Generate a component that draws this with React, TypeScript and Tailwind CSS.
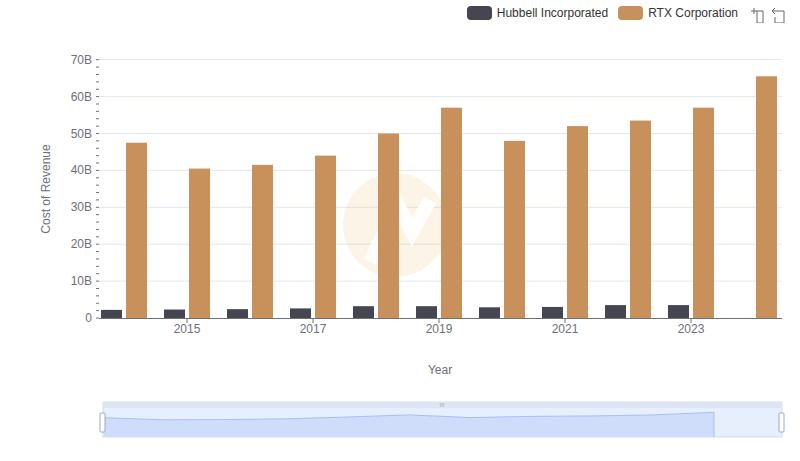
export default function App() {
  const rtx = [47.5, 40.5, 41.5, 44, 50, 57, 48, 52, 53.5, 57, 65.5];
  const hub = [2.2, 2.3, 2.4, 2.6, 3.2, 3.2, 2.9, 3.0, 3.5, 3.5, 0];
  const y = (v: number) => 318 - v * 3.69;
  const font = { fontFamily: '"Liberation Sans", Arial, sans-serif' };
  const minor: number[] = [];
  for (let i = 0; i <= 35; i++) minor.push(318 - i * 7.38);
  const area = rtx.map((v, i) => `${104 + i * 61} ${432 - v * 0.3}`).join(" L ");
  return (
    <div className="relative w-[800px] h-[461px] bg-white overflow-hidden" style={font}>
      <div className="absolute top-[3px] right-[12px] flex items-center gap-[10px] text-[12px] text-[#333]">
        <div className="flex items-center gap-[5px]">
          <span className="w-[25px] h-[14px] rounded-[4px] bg-[#464653]" />
          <span>Hubbell Incorporated</span>
        </div>
        <div className="flex items-center gap-[5px]">
          <span className="w-[25px] h-[14px] rounded-[4px] bg-[#c8905b]" />
          <span>RTX Corporation</span>
        </div>
        <svg width="40" height="20" viewBox="0 0 40 20" fill="none" stroke="#666" strokeWidth="1">
          <path d="M3 8 H9 M6 5 V11 M9 8 H15 V20 M9 8 V20 H15" />
          <path d="M27 5 L24 8 L27 11 M24 8 H36 V20 H27 V14" />
        </svg>
      </div>
      <svg className="absolute inset-0" width="800" height="461">
        {[10, 20, 30, 40, 50, 60, 70].map((v) => (
          <line key={v} x1="99" x2="782" y1={y(v)} y2={y(v)} stroke="#e0e6f1" />
        ))}
        {minor.map((m, i) => (
          <line key={i} x1="96" x2="99" y1={m} y2={m} stroke="#6e7079" />
        ))}
        {[0, 10, 20, 30, 40, 50, 60, 70].map((v) => (
          <text key={v} x="92" y={y(v) + 4} textAnchor="end" fontSize="12" fill="#6e7079">
            {v === 0 ? "0" : `${v}B`}
          </text>
        ))}
        <g opacity="0.12" fill="#e8a33d">
          <circle cx="395" cy="225" r="52" />
        </g>
        <path d="M368 215 L382 195 L380 260 Z" fill="white" opacity="0" />
        <path d="M370 262 L398 205 L412 232 L430 200" stroke="white" strokeWidth="14" fill="none" opacity="0.9" />
        {rtx.map((v, i) => {
          const c = 124 + 63 * i;
          return (
            <g key={i}>
              {hub[i] > 0 && <rect x={c - 23} y={y(hub[i])} width="21" height={318 - y(hub[i])} fill="#464653" />}
              <rect x={c + 2} y={y(v)} width="21" height={318 - y(v)} fill="#c8905b" />
            </g>
          );
        })}
        <line x1="99" x2="782" y1="318.5" y2="318.5" stroke="#6e7079" />
        {[2015, 2017, 2019, 2021, 2023].map((yr, k) => {
          const x = 187 + 126 * k;
          return (
            <g key={yr}>
              <line x1={x} x2={x} y1="318" y2="323" stroke="#6e7079" />
              <text x={x} y="333" textAnchor="middle" fontSize="12" fill="#6e7079">{yr}</text>
            </g>
          );
        })}
        <text x="440" y="374" textAnchor="middle" fontSize="12" fill="#6e7079">Year</text>
        <text transform="translate(50 189) rotate(-90)" textAnchor="middle" fontSize="12" fill="#6e7079">Cost of Revenue</text>
        <rect x="103" y="402" width="679" height="35" fill="#e7eefc" stroke="#d2dbee" />
        <rect x="103" y="402" width="679" height="6" fill="#dde4f3" />
        <text x="442" y="407" textAnchor="middle" fontSize="6" fill="#aaa">III</text>
        <path d={`M104 432 L ${area} L 714 ${432 - 65.5 * 0.3} L 714 437 L 104 437 Z`} fill="#d0ddfa" />
        <path d={`M104 432 L ${area} L 714 ${432 - 65.5 * 0.3} L714 437`} fill="none" stroke="#a9bff3" />
        <rect x="100" y="413" width="5" height="19" rx="1" fill="white" stroke="#9aa8c4" />
        <rect x="779" y="413" width="5" height="19" rx="1" fill="white" stroke="#9aa8c4" />
      </svg>
    </div>
  );
}
